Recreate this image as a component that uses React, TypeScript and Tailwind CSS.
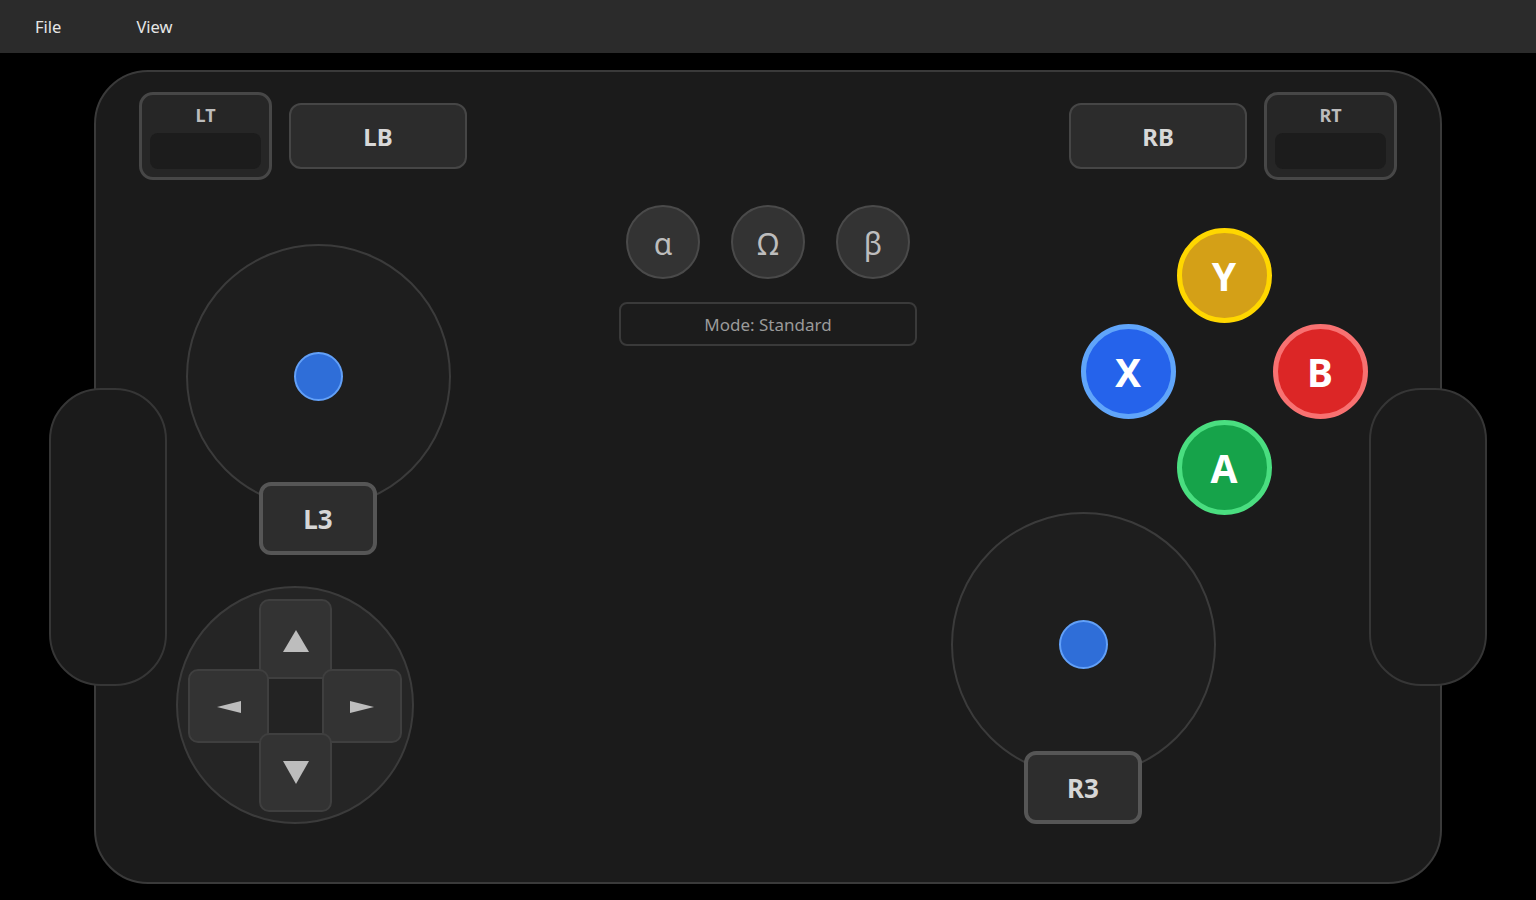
import React from "react";

const font = { fontFamily: '"Noto Sans", "Open Sans", Arial, sans-serif' };

function Trigger({ label }: { label: string }) {
  return (
    <div className="w-[133px] h-[88px] rounded-[14px] border-[3px] border-[#474747] bg-[#262626] flex flex-col items-center pt-[8px] px-[8px]">
      <span className="text-[18px] leading-[24px] font-bold text-[#bcbcbc]">{label}</span>
      <div className="mt-[6px] w-full h-[36px] rounded-[8px] bg-[#1c1c1c]" />
    </div>
  );
}

function Bumper({ label }: { label: string }) {
  return (
    <div className="w-[178px] h-[66px] rounded-[12px] border-2 border-[#464646] bg-[#2c2c2c] flex items-center justify-center">
      <span className="text-[24px] font-bold text-[#d8d8d8] mt-[2px]">{label}</span>
    </div>
  );
}

function Stick() {
  return (
    <div className="w-[265px] h-[265px] rounded-full border-2 border-[#3b3b3b] bg-[#1e1e1e] flex items-center justify-center">
      <div className="w-[49px] h-[49px] rounded-full border-2 border-[#62a0f8] bg-[#2f6ed8]" />
    </div>
  );
}

function StickClick({ label }: { label: string }) {
  return (
    <div className="relative z-10 w-[118px] h-[73px] rounded-[12px] border-4 border-[#565656] bg-[#2d2d2d] flex items-center justify-center">
      <span className="text-[26px] font-bold text-[#d6d6d6] mt-[2px]">{label}</span>
    </div>
  );
}

function Face({ label, className }: { label: string; className: string }) {
  return (
    <div className={`w-[95px] h-[95px] rounded-full border-[5px] flex items-center justify-center ${className}`}>
      <span className="text-[39px] font-bold text-white leading-none">{label}</span>
    </div>
  );
}

const padBtn = "rounded-[10px] border-2 border-[#3f3f3f] bg-[#333333] flex items-center justify-center";

function DPad() {
  return (
    <div className="w-[238px] h-[238px] rounded-full border-2 border-[#3b3b3b] bg-[#252525] flex items-center justify-center">
      <div className="grid grid-cols-[81px_53px_80px] grid-rows-[80px_54px_79px]">
        <div className={`col-start-2 row-start-1 -mx-[10px] ${padBtn}`}>
          <svg width="26" height="22" viewBox="0 0 26 22" className="mt-[4px]">
            <polygon points="13,0 26,22 0,22" fill="#bdbdbd" />
          </svg>
        </div>
        <div className={`col-start-1 row-start-2 -my-[10px] ${padBtn}`}>
          <svg width="24" height="12" viewBox="0 0 24 12" className="mt-[2px]">
            <polygon points="0,6 24,0 24,12" fill="#bdbdbd" />
          </svg>
        </div>
        <div className="col-start-2 row-start-2 bg-[#232323]" />
        <div className={`col-start-3 row-start-2 -my-[10px] ${padBtn}`}>
          <svg width="24" height="12" viewBox="0 0 24 12" className="mt-[2px]">
            <polygon points="0,0 24,6 0,12" fill="#bdbdbd" />
          </svg>
        </div>
        <div className={`col-start-2 row-start-3 -mx-[10px] ${padBtn}`}>
          <svg width="26" height="23" viewBox="0 0 26 23">
            <polygon points="0,0 26,0 13,23" fill="#bdbdbd" />
          </svg>
        </div>
      </div>
    </div>
  );
}

function Special({ glyph }: { glyph: string }) {
  return (
    <div className="w-[74px] h-[74px] rounded-full border-2 border-[#4a4a4a] bg-[#333333] flex items-center justify-center">
      <span className="text-[30px] text-[#bdbdbd] leading-none mt-[3px]">{glyph}</span>
    </div>
  );
}

export default function App() {
  return (
    <div className="w-[1536px] h-[900px] bg-black overflow-hidden" style={font}>
      {/* Menu bar */}
      <div className="h-[53px] bg-[#2b2b2b] flex items-center pl-[35px] pt-[2px] text-[16.5px] text-[#e6e6e6]">
        <span>File</span>
        <span className="ml-[75px]">View</span>
      </div>

      {/* Controller */}
      <div className="h-[847px] flex justify-center pt-[17px]">
        <div className="relative w-[1348px] h-[814px] rounded-[54px] border-2 border-[#3a3a3a] bg-[#1b1b1b]">
          {/* Grips */}
          <div className="absolute -left-[47px] top-[316px] w-[118px] h-[298px] rounded-[52px] border-2 border-[#363636] bg-[#1b1b1b]" />
          <div className="absolute -right-[47px] top-[316px] w-[118px] h-[298px] rounded-[52px] border-2 border-[#363636] bg-[#1b1b1b]" />

          <div className="flex px-[43px] pt-[20px]">
            {/* Left column */}
            <div className="w-[328px] flex flex-col">
              <div className="flex items-center gap-[17px]">
                <Trigger label="LT" />
                <Bumper label="LB" />
              </div>
              <div className="mt-[64px] ml-[47px]">
                <Stick />
              </div>
              <div className="-mt-[27px] ml-[120px]">
                <StickClick label="L3" />
              </div>
              <div className="mt-[31px] ml-[37px]">
                <DPad />
              </div>
            </div>

            {/* Center column */}
            <div className="ml-[152px] w-[298px] flex flex-col pt-[113px]">
              <div className="flex justify-center gap-[31px]">
                <Special glyph="α" />
                <Special glyph="Ω" />
                <Special glyph="β" />
              </div>
              <div className="mt-[23px] h-[44px] rounded-[8px] border-2 border-[#3a3a3a] bg-[#1c1c1c] flex items-center justify-center">
                <span className="text-[17px] text-[#9a9a9a] mt-[1px]">Mode: Standard</span>
              </div>
            </div>

            {/* Right column */}
            <div className="ml-[34px] w-[446px] flex flex-col">
              <div className="ml-[118px] flex items-center gap-[17px]">
                <Bumper label="RB" />
                <Trigger label="RT" />
              </div>
              <div className="ml-[129px] mt-[47px] grid grid-cols-[96px_96px_96px] grid-rows-[96px_96px_96px] place-items-center">
                <div className="col-start-2 row-start-1">
                  <Face label="Y" className="bg-[#d4a017] border-[#ffd700]" />
                </div>
                <div className="col-start-1 row-start-2">
                  <Face label="X" className="bg-[#2563eb] border-[#60a5fa]" />
                </div>
                <div className="col-start-3 row-start-2">
                  <Face label="B" className="bg-[#dc2626] border-[#f87171]" />
                </div>
                <div className="col-start-2 row-start-3">
                  <Face label="A" className="bg-[#16a34a] border-[#4ade80]" />
                </div>
              </div>
              <div className="-mt-[3px]">
                <Stick />
              </div>
              <div className="-mt-[26px] ml-[73px]">
                <StickClick label="R3" />
              </div>
            </div>
          </div>
        </div>
      </div>
    </div>
  );
}
